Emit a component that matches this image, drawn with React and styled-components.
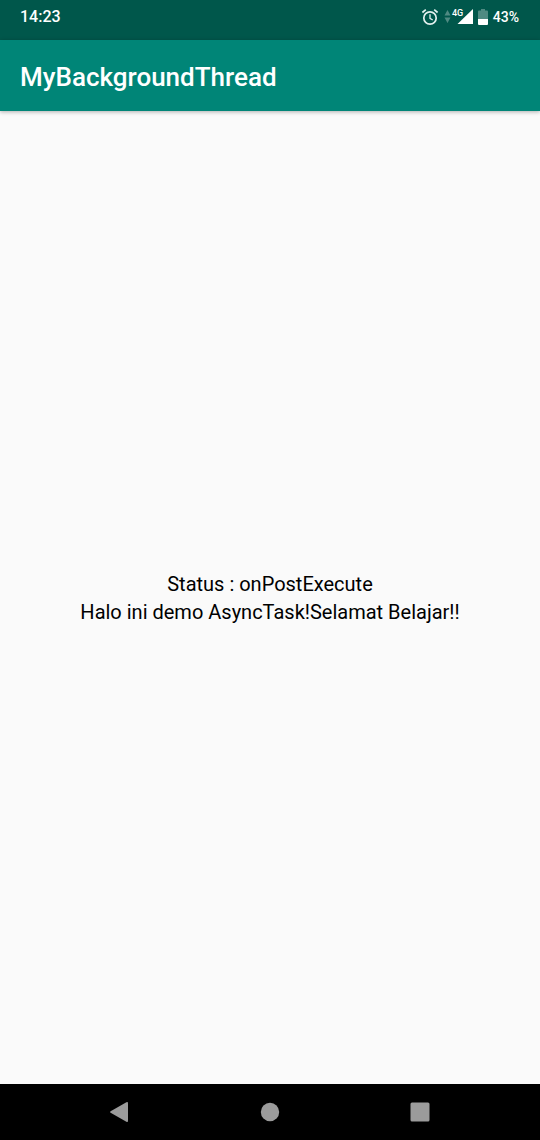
import React from "react";
import styled, { createGlobalStyle } from "styled-components";

const GlobalStyle = createGlobalStyle`
  * { box-sizing: border-box; }
  body {
    margin: 0;
    background: #fafafa;
    font-family: Roboto, "Noto Sans", sans-serif;
  }
`;

const Screen = styled.div`
  display: flex;
  flex-direction: column;
  min-height: 100vh;
`;

const StatusBar = styled.div`
  display: flex;
  align-items: center;
  justify-content: space-between;
  height: 40px;
  padding: 0 21px 6px 20px;
  background: #00574b;
  color: #fff;
`;

const StatusText = styled.span`
  font-size: ${(p) => p.$size}px;
  font-weight: 500;
  line-height: 20px;
`;

const StatusIcons = styled.div`
  display: flex;
  align-items: center;
  gap: 5px;
`;

const Icon = styled.svg`
  display: block;
  flex: none;
`;

const AppBar = styled.header`
  display: flex;
  align-items: center;
  height: 71px;
  padding: 2px 20px 0;
  background: #008577;
  box-shadow: 0 1px 4px rgba(0, 0, 0, 0.3);
`;

const Title = styled.h1`
  margin: 0;
  color: #fff;
  font-size: 26px;
  font-weight: 500;
  line-height: 32px;
`;

const Content = styled.main`
  flex: 1;
  display: flex;
  flex-direction: column;
  align-items: center;
  justify-content: center;
  padding: 20px;
`;

const Message = styled.p`
  margin: 0;
  color: #000;
  font-size: 20px;
  line-height: 28px;
  text-align: center;
`;

const NavBar = styled.nav`
  display: grid;
  grid-template-columns: repeat(3, 1fr);
  height: 56px;
  padding: 0 45px;
  background: #000;
`;

const NavButton = styled.button`
  display: flex;
  align-items: center;
  justify-content: center;
  padding: 0;
  border: 0;
  background: none;
  color: #9b9b9b;
`;

const AlarmIcon = () => (
  <Icon width="18" height="18" viewBox="0 0 18 18" fill="none" stroke="#e3f0ee" aria-hidden="true">
    <circle cx="9" cy="10" r="6.2" strokeWidth="1.7" />
    <path d="M9 6.3v4.1l2.7 1.6" strokeWidth="1.3" />
    <path d="M1.4 4.5 4.8 1.6M16.6 4.5 13.2 1.6" strokeWidth="1.7" />
  </Icon>
);

const SignalIcon = () => (
  <Icon width="29" height="18" viewBox="0 0 29 18" aria-hidden="true">
    <path d="M0.5 7.500 3.500 2l3 5.500zM0.500 9.500h6l-3 5.500z" fill="#4f8a82" />
    <path d="M29 1v15H13.500z" fill="#fff" />
    <path d="M8 0h12v6l-3 3H8z" fill="#00574b" />
    <text x="8" y="8" fill="#fff" fontSize="9" fontWeight="500" fontFamily="Roboto, sans-serif">
      4G
    </text>
  </Icon>
);

const BatteryIcon = () => (
  <Icon width="10" height="18" viewBox="0 0 10 18" aria-hidden="true">
    <path d="M3 1h4v1.500h2q1 0 1 1V11H0V3.500q0-1 1-1h2z" fill="#4f8a82" />
    <path d="M0 11h10v5q0 1-1 1H1q-1 0-1-1z" fill="#fff" />
  </Icon>
);

const BackIcon = () => (
  <Icon width="22" height="22" viewBox="0 0 22 22" fill="currentColor" aria-hidden="true">
    <path d="M1.600 10.200 17.400 1.200q1.600-.8 1.600 1v17.600q0 1.800-1.600 1L1.600 11.800q-1.200-.8 0-1.600z" />
  </Icon>
);

const HomeIcon = () => (
  <Icon width="20" height="20" viewBox="0 0 20 20" fill="currentColor" aria-hidden="true">
    <circle cx="10" cy="10" r="9.200" />
  </Icon>
);

const RecentsIcon = () => (
  <Icon width="20" height="20" viewBox="0 0 20 20" fill="currentColor" aria-hidden="true">
    <rect x="0.500" y="0.500" width="19" height="19" rx="1.500" />
  </Icon>
);

export default function App() {
  return (
    <>
      <GlobalStyle />
      <Screen>
        <StatusBar>
          <StatusText $size={16}>14:23</StatusText>
          <StatusIcons>
            <AlarmIcon />
            <SignalIcon />
            <BatteryIcon />
            <StatusText $size={14}>43%</StatusText>
          </StatusIcons>
        </StatusBar>
        <AppBar>
          <Title>MyBackgroundThread</Title>
        </AppBar>
        <Content>
          <Message>Status : onPostExecute</Message>
          <Message>Halo ini demo AsyncTask!Selamat Belajar!!</Message>
        </Content>
        <NavBar>
          <NavButton type="button" aria-label="Back"><BackIcon /></NavButton>
          <NavButton type="button" aria-label="Home"><HomeIcon /></NavButton>
          <NavButton type="button" aria-label="Recent apps"><RecentsIcon /></NavButton>
        </NavBar>
      </Screen>
    </>
  );
}
